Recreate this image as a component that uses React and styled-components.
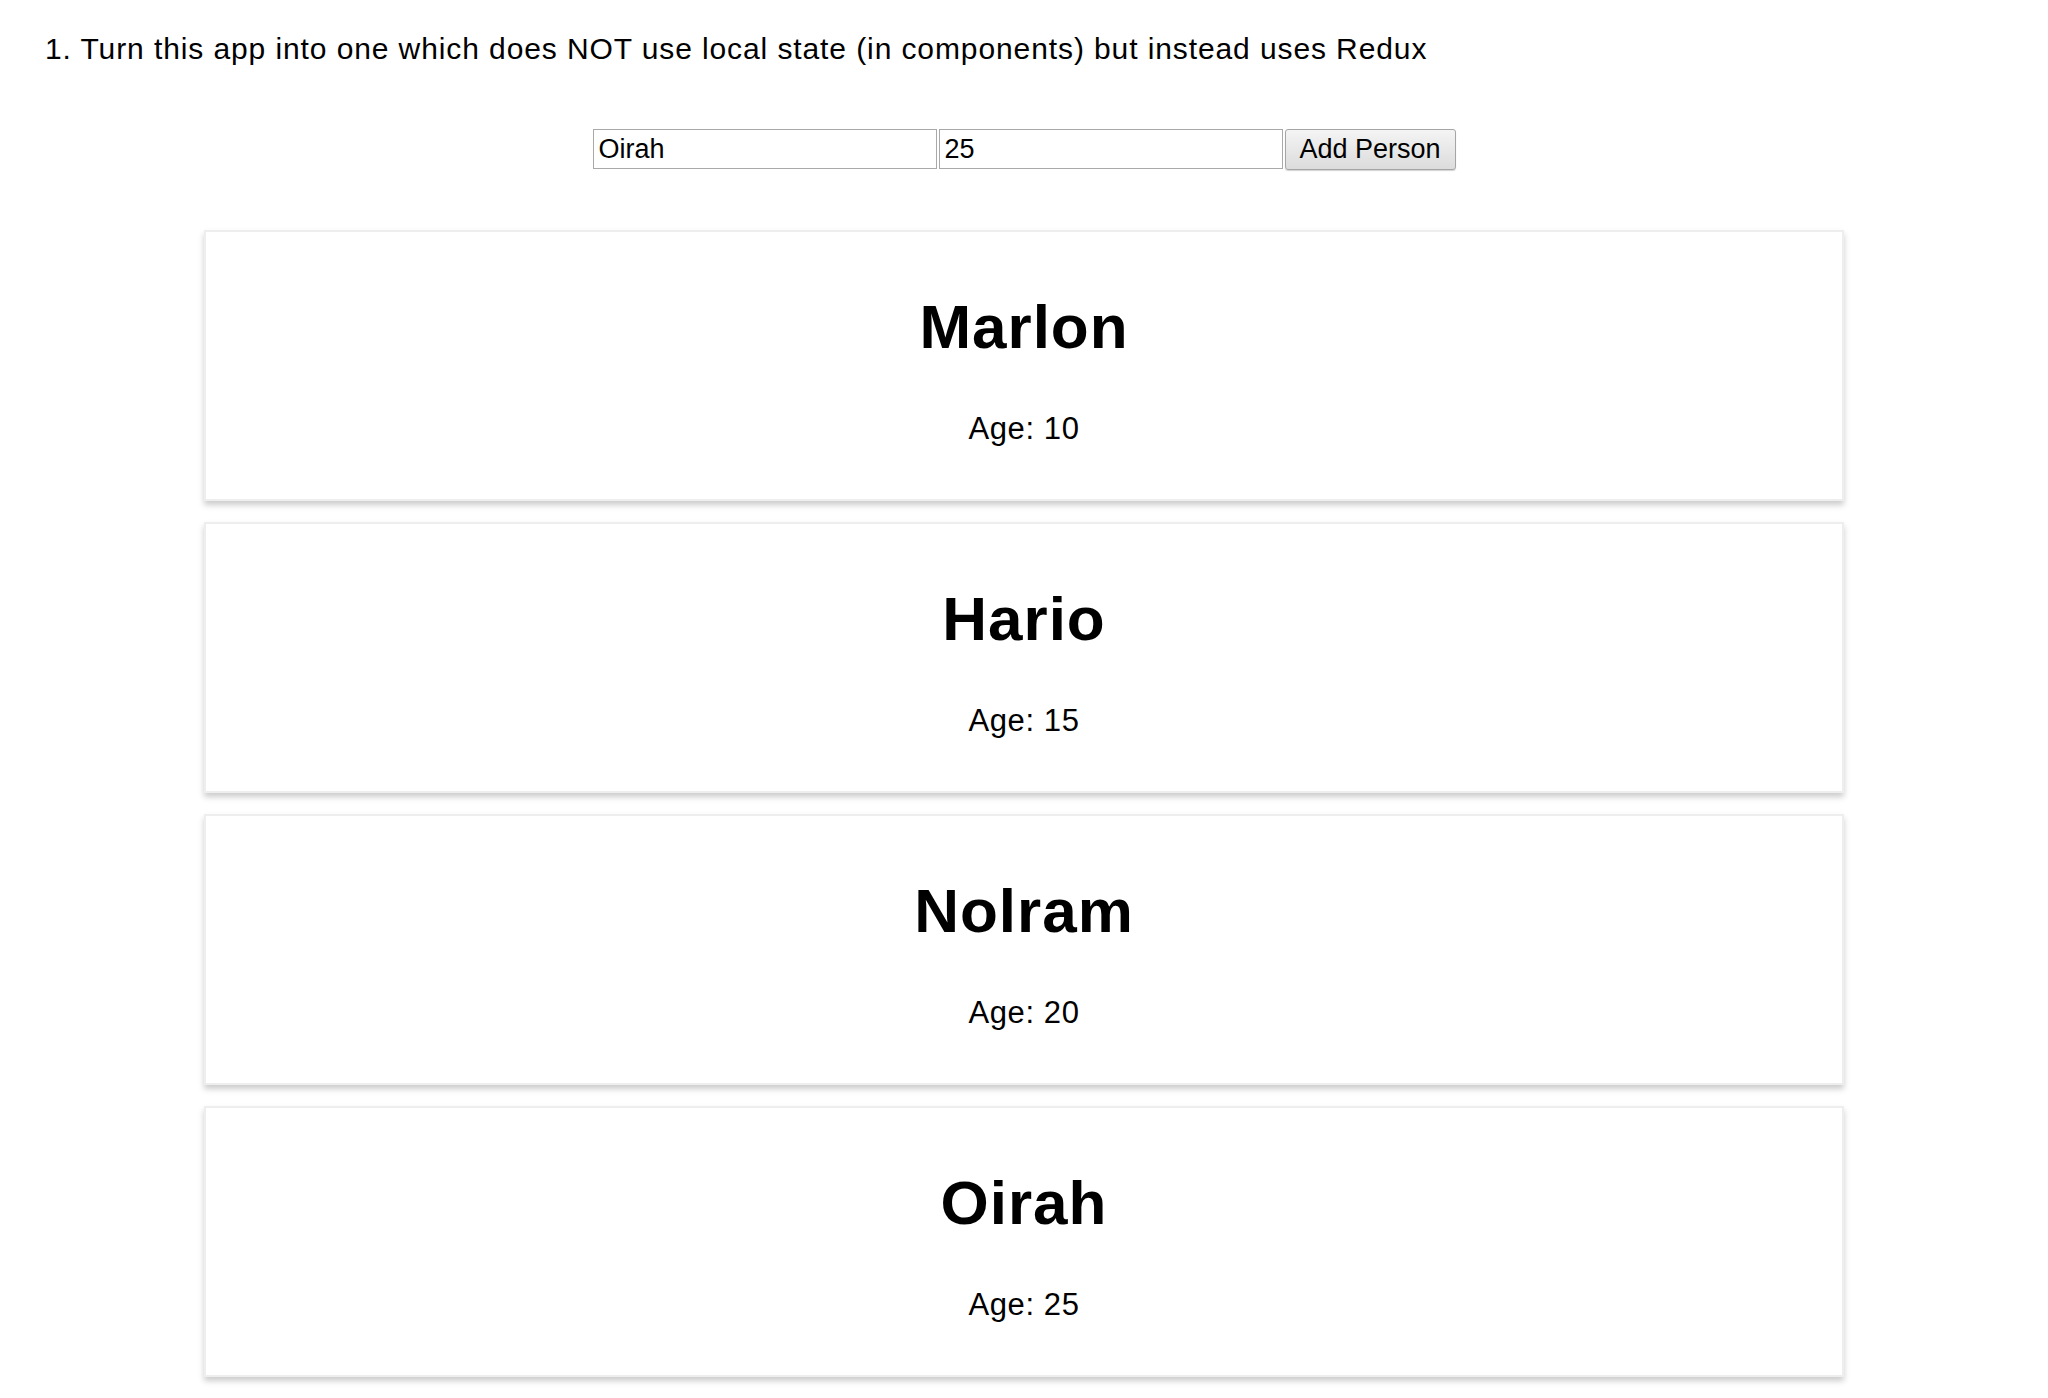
import { useState } from "react";
import styled, { createGlobalStyle } from "styled-components";

const GlobalStyle = createGlobalStyle`
  body {
    margin: 0;
    background: #fff;
    color: #000;
    font-family: "Liberation Sans", Arial, sans-serif;
  }
`;

const Page = styled.div`
  padding: 32px 0 40px;
`;

const Task = styled.p`
  margin: 0;
  padding-left: 45px;
  font-size: 30px;
  line-height: 34px;
  letter-spacing: 0.9px;
`;

const AddForm = styled.form`
  display: flex;
  justify-content: center;
  gap: 2px;
  margin-top: 63px;
`;

const Field = styled.input`
  box-sizing: border-box;
  width: 344px;
  height: 40px;
  padding: 0 5px;
  border: 1px solid #a9a9a9;
  font-family: inherit;
  font-size: 27px;
  color: #000;
  outline: none;
`;

const AddButton = styled.button`
  box-sizing: border-box;
  width: 171px;
  height: 41px;
  padding: 0;
  border: 1px solid #a5a5a5;
  border-radius: 3px;
  background: linear-gradient(#f4f4f4, #dcdcdc);
  box-shadow: 0 1px 1px rgba(0, 0, 0, 0.18);
  font-family: inherit;
  font-size: 27px;
  color: #000;
  cursor: pointer;
`;

const PersonList = styled.div`
  margin-top: 60px;
`;

const PersonCard = styled.div`
  box-sizing: border-box;
  width: 1640px;
  margin: 0 auto 21px;
  padding: 30px;
  border: 2px solid #eee;
  box-shadow: 0 4px 6px #ccc;
  text-align: center;
`;

const Name = styled.h1`
  margin: 31px 0 50px;
  font-size: 62px;
  line-height: 68px;
  letter-spacing: 1px;
  font-weight: bold;
`;

const Age = styled.p`
  margin: 0 0 23px;
  font-size: 31px;
  line-height: 35px;
  letter-spacing: 0.6px;
`;

const initialPersons = [
  { id: 1, name: "Marlon", age: 10 },
  { id: 2, name: "Hario", age: 15 },
  { id: 3, name: "Nolram", age: 20 },
  { id: 4, name: "Oirah", age: 25 },
];

export default function App() {
  const [persons, setPersons] = useState(initialPersons);
  const [name, setName] = useState("Oirah");
  const [age, setAge] = useState("25");

  const addPerson = (e) => {
    e.preventDefault();
    setPersons([...persons, { id: Date.now(), name, age }]);
  };

  return (
    <Page>
      <GlobalStyle />
      <Task>
        1. Turn this app into one which does NOT use local state (in components) but instead uses Redux
      </Task>
      <AddForm onSubmit={addPerson}>
        <Field type="text" value={name} onChange={(e) => setName(e.target.value)} />
        <Field type="number" value={age} onChange={(e) => setAge(e.target.value)} />
        <AddButton type="submit">Add Person</AddButton>
      </AddForm>
      <PersonList>
        {persons.map((p) => (
          <PersonCard key={p.id}>
            <Name>{p.name}</Name>
            <Age>Age: {p.age}</Age>
          </PersonCard>
        ))}
      </PersonList>
    </Page>
  );
}
